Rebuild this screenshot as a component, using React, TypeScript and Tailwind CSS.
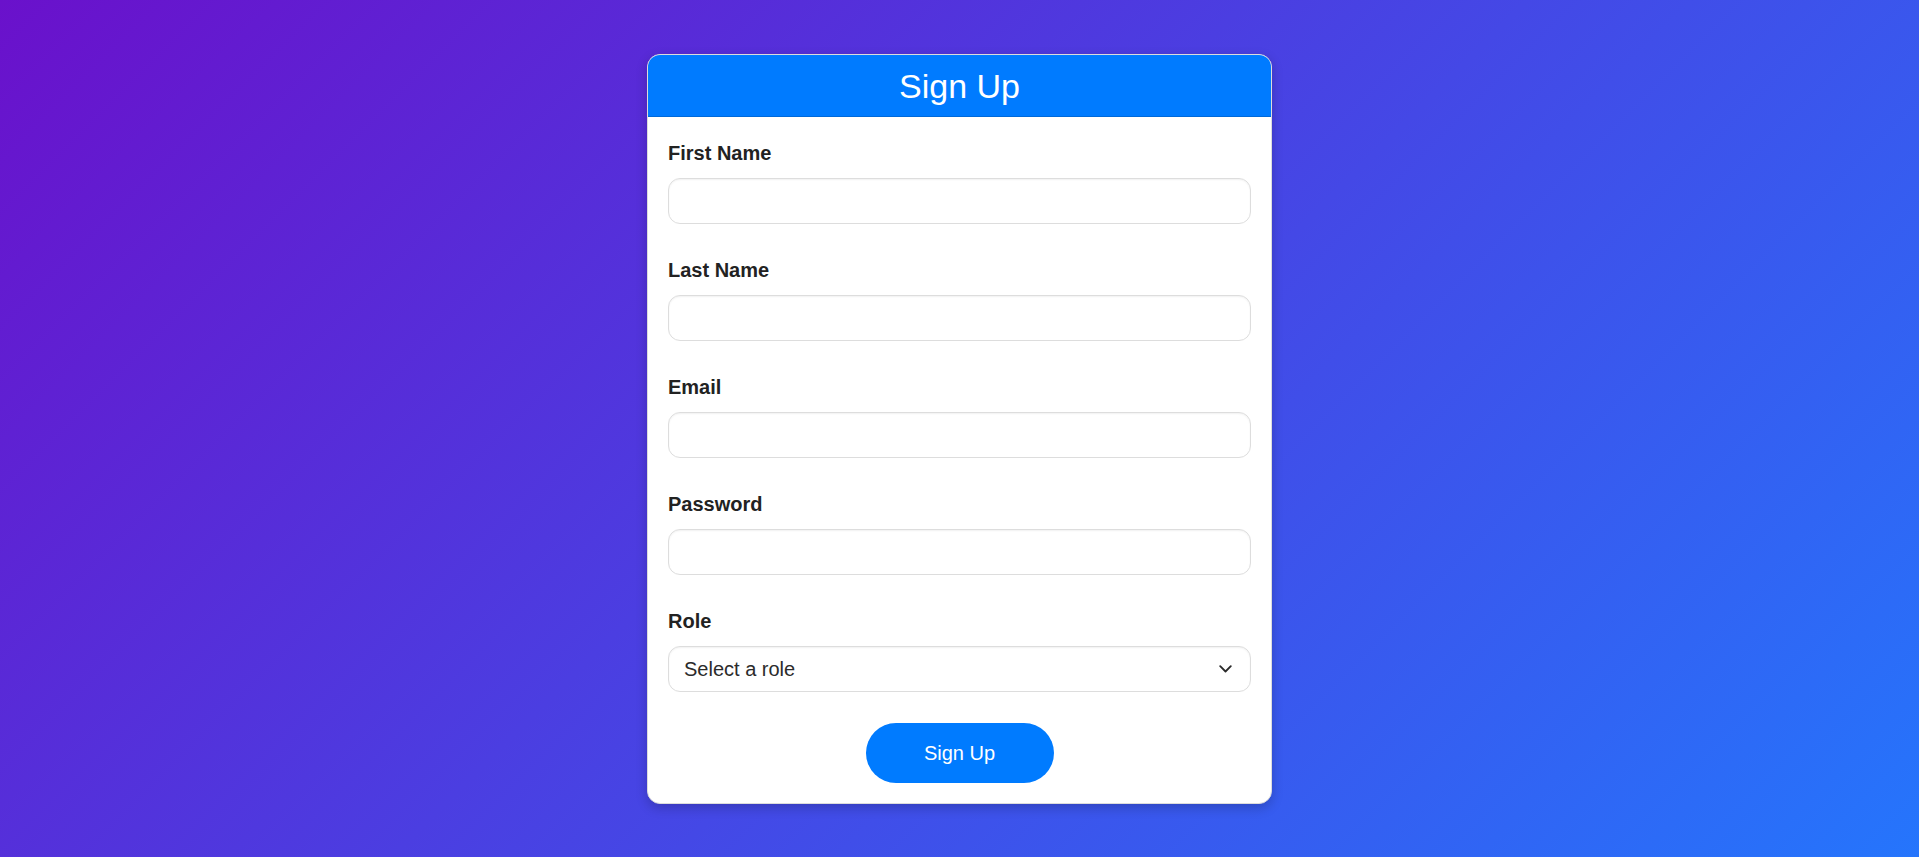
import React from "react";

const fields = ["First Name", "Last Name", "Email", "Password"];

export default function App() {
  return (
    <div className="min-h-screen w-full flex items-center justify-center bg-[linear-gradient(135deg,#6a11cb_0%,#2575fc_100%)] font-['Liberation_Sans',Arial,sans-serif]">
      <div className="w-[625px] bg-white border border-[#dcdcdc] rounded-[13px] overflow-hidden shadow-[0_4px_12px_rgba(0,0,0,0.2)]">
        <div className="h-[62px] bg-[#007bff] border-b border-[#0069d9] flex items-center justify-center">
          <h2 className="text-white text-[34px] leading-none font-normal mt-[2px]">Sign Up</h2>
        </div>
        <form className="px-[20px] pt-[23px] pb-[20px] flex flex-col" onSubmit={(e) => e.preventDefault()}>
          {fields.map((f) => (
            <div key={f} className="flex flex-col mb-[33px]">
              <label className="h-[23px] leading-[23px] mt-[2px] mb-[13px] text-[20px] font-bold text-[#222]">{f}</label>
              <input
                type={f === "Password" ? "password" : f === "Email" ? "email" : "text"}
                className="h-[46px] w-full rounded-[12px] border border-[#dddddd] bg-white px-[16px] text-[20px] outline-none shadow-[inset_0_1px_2px_rgba(0,0,0,0.06)]"
              />
            </div>
          ))}
          <div className="flex flex-col mb-[31px]">
            <label className="h-[23px] leading-[23px] mt-[2px] mb-[13px] text-[20px] font-bold text-[#222]">Role</label>
            <div className="relative">
              <select
                defaultValue=""
                className="appearance-none h-[46px] w-full rounded-[12px] border border-[#dddddd] bg-white pl-[15px] pr-[40px] text-[20px] text-[#2b2b2b] outline-none shadow-[inset_0_1px_2px_rgba(0,0,0,0.06)]"
              >
                <option value="">Select a role</option>
                <option value="user">User</option>
                <option value="admin">Admin</option>
              </select>
              <svg
                className="pointer-events-none absolute right-[19px] top-1/2 -translate-y-1/2"
                width="13"
                height="8"
                viewBox="0 0 13 8"
                fill="none"
              >
                <polyline points="1.2,1.2 6.5,6.5 11.8,1.2" stroke="#2a2a2a" strokeWidth="1.8" strokeLinecap="round" strokeLinejoin="round" />
              </svg>
            </div>
          </div>
          <div className="flex justify-center">
            <button
              type="submit"
              className="h-[60px] w-[188px] rounded-full bg-[#007bff] text-white text-[20px] font-normal"
            >
              Sign Up
            </button>
          </div>
        </form>
      </div>
    </div>
  );
}
